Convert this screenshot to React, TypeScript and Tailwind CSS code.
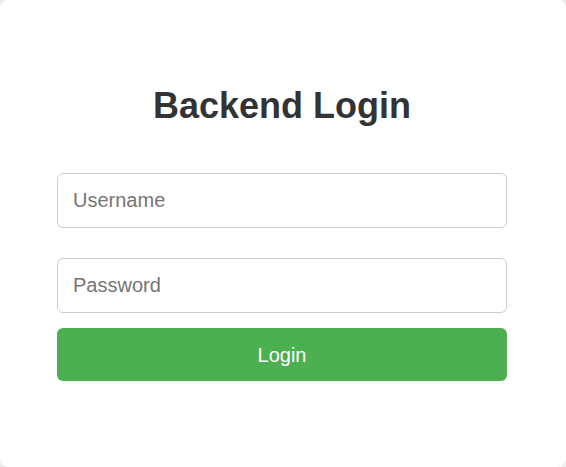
export default function App() {
  return (
    <div className="min-h-screen bg-[#f0f0f0] font-['Liberation_Sans',Arial,sans-serif]">
      <div className="h-[467px] w-[566px] rounded-lg bg-white pl-[57px] pt-[85px] shadow-[0_0_4px_rgba(0,0,0,0.08)]">
        <div className="w-[450px]">
          <h2 className="mb-[47px] text-center text-[36px] font-bold leading-[41px] text-[#333]">
            Backend Login
          </h2>
          <form onSubmit={(e) => e.preventDefault()} className="flex flex-col">
            <input
              type="text"
              placeholder="Username"
              className="h-[55px] w-full rounded-md border border-[#ccc] px-[15px] text-[20px] text-[#333] placeholder:text-[#757575] focus:outline-none"
            />
            <input
              type="password"
              placeholder="Password"
              className="mt-[30px] h-[55px] w-full rounded-md border border-[#ccc] px-[15px] text-[20px] text-[#333] placeholder:text-[#757575] focus:outline-none"
            />
            <button
              type="submit"
              className="mt-[15px] h-[53px] w-full rounded-md bg-[#4caf50] text-[20px] text-white"
            >
              Login
            </button>
          </form>
        </div>
      </div>
    </div>
  );
}
